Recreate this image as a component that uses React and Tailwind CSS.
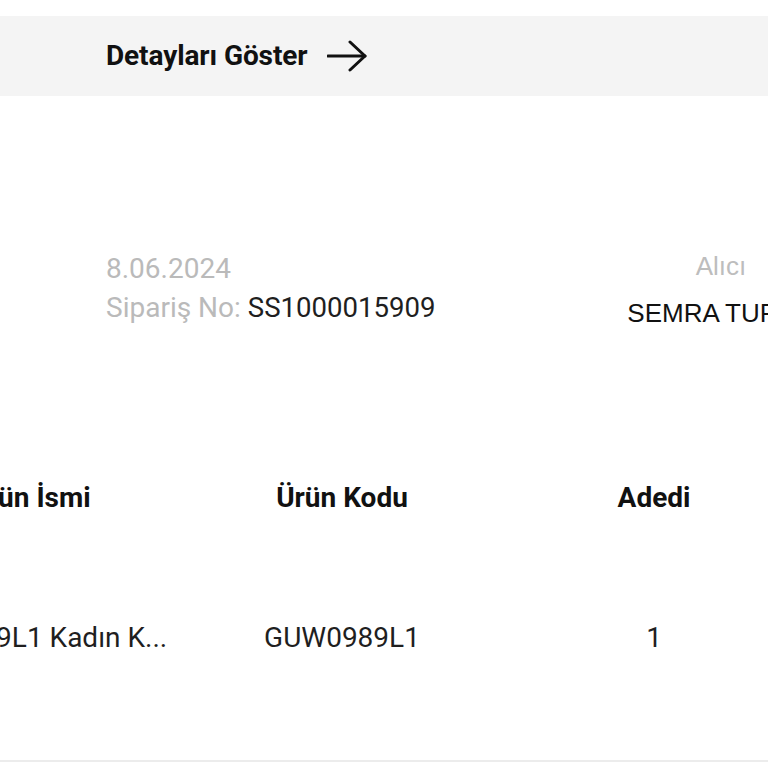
import React from "react";

const order = {
  date: "8.06.2024",
  no: "SS1000015909",
  receiver: "SEMRA TURAN",
};

const items = [
  { name: "GUW0989L1 Kadın K...", code: "GUW0989L1", qty: 1 },
];

function ArrowIcon() {
  return (
    <svg width="40" height="32" viewBox="0 0 40 32" fill="none">
      <path d="M1 16h37" stroke="#111" strokeWidth="3" strokeLinecap="round" />
      <path
        d="M23 2l15 14-15 14"
        stroke="#111"
        strokeWidth="3"
        strokeLinecap="round"
        strokeLinejoin="round"
      />
    </svg>
  );
}

export default function App() {
  return (
    <div className="relative h-[768px] w-[768px] overflow-hidden bg-white font-['Roboto',sans-serif] text-[#1f1f1f]">
      <div className="pt-4">
        <div className="flex h-20 items-center gap-5 bg-[#f4f4f4] pl-[106px]">
          <span className="text-[28px] font-bold leading-none tracking-[-0.1px] text-[#111]">
            Detayları Göster
          </span>
          <ArrowIcon />
        </div>
      </div>

      <div className="mt-[153px] flex">
        <div className="w-[596px] shrink-0 pl-[106px] text-[28px] leading-[39px]">
          <div className="text-[#bababa]">{order.date}</div>
          <div>
            <span className="text-[#bababa]">Sipariş No: </span>
            <span className="text-[27.6px] text-[#1f1f1f]">{order.no}</span>
          </div>
        </div>
        <div className="mt-px w-[250px] shrink-0 text-center font-['Liberation_Sans',Arial,sans-serif] text-[26px] leading-[32px]">
          <div className="text-[#bdbdbd]">Alıcı</div>
          <div className="mt-[15px] whitespace-nowrap text-[#111]">
            {order.receiver}
          </div>
        </div>
      </div>

      <div className="ml-[-126px] mt-[149px] flex w-[1248px] text-[28px] font-bold leading-[40px] text-[#111]">
        <div className="w-[312px] shrink-0 text-center">Ürün İsmi</div>
        <div className="w-[312px] shrink-0 text-center">Ürün Kodu</div>
        <div className="w-[312px] shrink-0 text-center">Adedi</div>
      </div>

      {items.map((item) => (
        <div
          key={item.code}
          className="ml-[-126px] mt-[100px] flex w-[1248px] text-[28px] leading-[40px] text-[#1f1f1f]"
        >
          <div className="w-[312px] shrink-0 whitespace-nowrap pr-[6px] text-center">
            {item.name}
          </div>
          <div className="w-[312px] shrink-0 text-center">{item.code}</div>
          <div className="w-[312px] shrink-0 text-center">{item.qty}</div>
        </div>
      ))}

      <div className="mt-[102px] h-[2px] bg-[#ececec]" />
    </div>
  );
}
